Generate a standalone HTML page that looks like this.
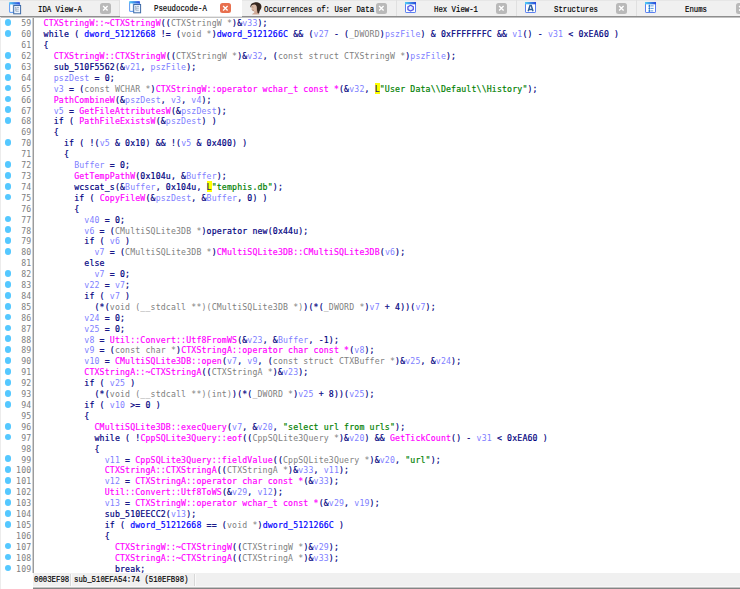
<!DOCTYPE html>
<html><head><meta charset="utf-8"><title>IDA Pseudocode-A</title>
<style>
html,body{margin:0;padding:0;background:#fff;}
#app{border-left:0;position:relative;width:740px;height:589px;overflow:hidden;background:#fff;font-family:"Liberation Sans",sans-serif;}
#tabs{position:absolute;left:0;top:0;width:740px;height:17px;background:#f0f0f0;box-sizing:border-box;border-bottom:1px solid #8e8e8e;border-top:1px solid #e6e6e6;}
.tab{position:absolute;top:-1px;height:16px;box-sizing:border-box;border-right:1px solid #e0e0e0;}
.tab.active{background:#fff;height:17px;border-right:none;border-bottom:1px solid #e8e8e8;}
.tl{position:absolute;top:4.7px;height:10px;line-height:10px;white-space:pre;color:#000;font-family:"Liberation Mono","Liberation Serif",monospace;font-size:9.5px;transform-origin:0 50%;transform:scaleX(0.772);-webkit-text-stroke:0.2px #000;}
.x{position:absolute;top:3.2px;width:10.7px;height:10.6px;border-radius:2.5px;background:#b9b9b9;}
.x.on{background:#e8704f;}
.x svg{position:absolute;left:0;top:0;}
.ic{position:absolute;top:1px;}
#code{position:absolute;left:0;top:17px;width:740px;height:556px;background:#fff;overflow:hidden;box-sizing:border-box;border-top:1px solid #c2c2c2;border-left:1px solid #ececec;}
#gutterline{position:absolute;left:31px;top:0;width:1px;height:572px;background:#9c9c9c;border-left:1px solid #d0d0d0;}
.r{position:relative;left:-1px;height:10.91px;line-height:10.91px;white-space:pre;font-family:"DejaVu Sans Mono","Liberation Mono",monospace;font-size:8.2px;letter-spacing:0.164px;color:#000080;top:0.3px;}
.dot{position:absolute;left:4.7px;top:0.9px;width:6.8px;height:6.8px;border-radius:50%;background:#55c8ff;}
.n{position:absolute;left:0;width:31.4px;text-align:right;color:#808080;}
.c{position:absolute;left:43.6px;-webkit-text-stroke:0.18px currentColor;}
.m{color:#ff00ff}.g{color:#808080;-webkit-text-stroke:0}.d{color:#0000ff}.v{color:#8080ff;-webkit-text-stroke:0}.s{color:#008000}.L{background:#ffff00;color:#202080;padding:0.9px 0 0.3px 0}
#status{position:absolute;left:33px;top:573px;width:707px;height:16px;background:linear-gradient(to bottom,#f0f0f0 0,#f0f0f0 13px,#f8f8f8 13px,#f8f8f8 14px,#c4c4c4 14px,#c4c4c4 15px);box-sizing:border-box;border-bottom:1px solid #858585;font-family:"Liberation Mono","Liberation Serif",monospace;font-size:9.5px;color:#000;white-space:pre;}
#status span{position:absolute;top:2px;height:10px;line-height:10px;transform-origin:0 50%;transform:scaleX(0.772);-webkit-text-stroke:0.2px #000;}
#status i{position:absolute;top:1px;width:1px;height:12px;background:#d8d8d8;border-right:1px solid #fafafa;}
.sb1{left:1px}.sb2{left:40.5px}

#leftedge{position:absolute;left:0;top:17px;width:1px;height:572px;background:#ececec;}
.tab.active .tl{top:4px}.tab.active .x{top:2.5px}.tab.active .ic{margin-top:-0.8px}

</style></head><body>
<div id="app">
<div id="tabs">
<svg width="0" height="0" style="position:absolute"><defs>
<linearGradient id="gt" x1="0" y1="0" x2="1" y2="0"><stop offset="0" stop-color="#4fd0f6"/><stop offset="1" stop-color="#2a45d8"/></linearGradient>
<linearGradient id="gb" x1="0" y1="0" x2="0" y2="1"><stop offset="0" stop-color="#5b8df0"/><stop offset="1" stop-color="#7aa0ee"/></linearGradient>
</defs></svg>
<div class="tab" style="left:0px;width:120px"><svg class="ic" style="left:9.0px;top:1.5px" width="13" height="13" viewBox="0 0 13 13">
<rect x="0.6" y="0.9" width="9.9" height="9.5" rx="0.8" fill="#cfe3fb" stroke="#6aa2f4" stroke-width="1.2"/>
<rect x="0.3" y="0.3" width="10.4" height="2.2" fill="url(#gt)"/>
<rect x="1.3" y="2.6" width="2.2" height="7.1" fill="#fff"/>
<rect x="4.7" y="3.5" width="6.9" height="8.3" fill="#eef5ff" stroke="#3d6aa6" stroke-width="1"/>
<path d="M6.2 5.4h1.2M6.8 5.4v3.8M6.8 7.2h3M6.8 9.2h3M8 5.4h2" stroke="#7f93ab" stroke-width="0.7" fill="none"/>
</svg><span class="tl" style="left:38.0px">IDA View-A</span><i class="x" style="left:100px"><svg width="11" height="11" viewBox="0 0 11 11"><path d="M3.1 3.1L7.6 7.6M7.6 3.1L3.1 7.6" stroke="#fff" stroke-width="1.35" fill="none"/></svg></i></div>
<div class="tab active" style="left:120px;width:122px"><svg class="ic" style="left:9.3px;top:1.5px" width="13" height="13" viewBox="0 0 13 13">
<rect x="0.6" y="0.9" width="9.9" height="9.5" rx="0.8" fill="#cfe3fb" stroke="#6aa2f4" stroke-width="1.2"/>
<rect x="0.3" y="0.3" width="10.4" height="2.2" fill="url(#gt)"/>
<rect x="1.3" y="2.6" width="2.2" height="7.1" fill="#fff"/>
<rect x="4.7" y="3.5" width="6.9" height="8.3" fill="#eef5ff" stroke="#3d6aa6" stroke-width="1"/>
<path d="M6.2 5.4h1.2M6.8 5.4v3.8M6.8 7.2h3M6.8 9.2h3M8 5.4h2" stroke="#7f93ab" stroke-width="0.7" fill="none"/>
</svg><span class="tl" style="left:34.3px">Pseudocode-A</span><i class="x on" style="left:100.2px"><svg width="11" height="11" viewBox="0 0 11 11"><path d="M3.1 3.1L7.6 7.6M7.6 3.1L3.1 7.6" stroke="#fff" stroke-width="1.35" fill="none"/></svg></i></div>
<div class="tab" style="left:242px;width:155px"><svg class="ic" style="left:7.5px;top:1.5px" width="13" height="13" viewBox="0 0 13 13">
<path d="M3.4 8L7.6 5.5L8 10.8C8.8 11.3 9.4 11.8 9.6 12.4L2 12.4C2.6 11.6 3.8 11.2 4.4 10.6Z" fill="#cfa794"/>
<path d="M0.4 5C0.2 2.5 2 0.6 4.5 0.4C6.5 0.2 8.5 0.4 10 1.5C11.6 2.8 11.8 5 11 6.8C10.4 8 9.6 8.6 9.4 10L9 11.5L7.6 11L7 8L5.5 3.5L2 3L1 5.5Z" fill="#35261f"/>
<path d="M1.4 4.5C1.6 3.2 3 2.4 4.5 2.6C6 2.8 6.8 4 6.8 5.5C6.8 7.5 6.2 9 5 9.5C3.6 9.8 2.4 9 1.9 7.6C1.5 6.6 1.3 5.5 1.4 4.5Z" fill="#dbbba8"/>
<path d="M1.6 5.2C2.2 4.8 3 4.8 3.4 5.2M1.9 7.6C2.4 8.4 3.2 8.6 4 8.2" stroke="#8a5f50" stroke-width="0.6" fill="none"/>
</svg><span class="tl" style="left:22.3px">Occurrences of: User Data</span><i class="x" style="left:134.2px"><svg width="11" height="11" viewBox="0 0 11 11"><path d="M3.1 3.1L7.6 7.6M7.6 3.1L3.1 7.6" stroke="#fff" stroke-width="1.35" fill="none"/></svg></i></div>
<div class="tab" style="left:397px;width:120px"><svg class="ic" style="left:8.0px;top:1.5px" width="12" height="12" viewBox="0 0 12 12">
<rect x="0.5" y="0.5" width="10" height="10" rx="0.6" fill="#fff" stroke="#5a7ff0" stroke-width="1"/>
<rect x="0" y="0" width="11" height="2.3" fill="url(#gt)"/>
<path d="M5.6 3.3L8.3 4.8V7.6L5.6 9L2.9 7.6V4.8Z" fill="#e4f0ff" stroke="#5353e6" stroke-width="1.3" stroke-linejoin="round"/></svg><span class="tl" style="left:37px">Hex View-1</span><i class="x" style="left:99.2px"><svg width="11" height="11" viewBox="0 0 11 11"><path d="M3.1 3.1L7.6 7.6M7.6 3.1L3.1 7.6" stroke="#fff" stroke-width="1.35" fill="none"/></svg></i></div>
<div class="tab" style="left:517px;width:120px"><svg class="ic" style="left:8.3px;top:1.5px" width="12" height="12" viewBox="0 0 12 12">
<rect x="0.5" y="0.5" width="10" height="10" rx="0.6" fill="#fff" stroke="#5a7ff0" stroke-width="1"/>
<rect x="0" y="0" width="11" height="2.3" fill="url(#gt)"/>
<path d="M3.2 9.3L5 3.4H6.2L8 9.3M4 7.4H7.2" fill="none" stroke="#2f5f9a" stroke-width="1.5"/></svg><span class="tl" style="left:36.8px">Structures</span><i class="x" style="left:99.2px"><svg width="11" height="11" viewBox="0 0 11 11"><path d="M3.1 3.1L7.6 7.6M7.6 3.1L3.1 7.6" stroke="#fff" stroke-width="1.35" fill="none"/></svg></i></div>
<div class="tab" style="left:637px;width:120px;border-right:none"><svg class="ic" style="left:8.0px;top:1.5px" width="12" height="12" viewBox="0 0 12 12">
<rect x="0.5" y="0.5" width="10" height="10" rx="0.6" fill="#fff" stroke="#5a7ff0" stroke-width="1"/>
<rect x="0" y="0" width="11" height="2.3" fill="url(#gt)"/>
<path d="M4.4 2.5V10" stroke="#4f8fe0" stroke-width="0.8"/><circle cx="4.4" cy="3.9" r="0.9" fill="#1f78d0"/><circle cx="4.4" cy="6.4" r="0.9" fill="#1f78d0"/><circle cx="4.4" cy="8.9" r="0.9" fill="#1f78d0"/><path d="M5.6 3.9H8.6M5.6 6.4H8.6M5.6 8.9H8.2" stroke="#4a90d8" stroke-width="0.9"/></svg><span class="tl" style="left:48.3px">Enums</span><i class="x" style="left:99px"><svg width="11" height="11" viewBox="0 0 11 11"><path d="M3.1 3.1L7.6 7.6M7.6 3.1L3.1 7.6" stroke="#fff" stroke-width="1.35" fill="none"/></svg></i></div>
</div>
<div id="code">
<div id="gutterline"></div>
<div class="r"><i class="dot"></i><span class="n">59</span><span class="c"><span class="m">CTXStringW::~CTXStringW</span>((<span class="g">CTXStringW *</span>)&amp;<span class="v">v33</span>);</span></div>
<div class="r"><i class="dot"></i><span class="n">60</span><span class="c">while ( <span class="d">dword_51212668</span> != (<span class="g">void *</span>)<span class="d">dword_5121266C</span> &amp;&amp; (<span class="v">v27</span> - (<span class="g">_DWORD</span>)<span class="v">pszFile</span>) &amp; 0xFFFFFFFC &amp;&amp; <span class="v">v1</span>() - <span class="v">v31</span> &lt; 0xEA60 )</span></div>
<div class="r"><span class="n">61</span><span class="c">{</span></div>
<div class="r"><i class="dot"></i><span class="n">62</span><span class="c">  <span class="m">CTXStringW::CTXStringW</span>((<span class="g">CTXStringW *</span>)&amp;<span class="v">v32</span>, (<span class="g">const struct CTXStringW *</span>)<span class="v">pszFile</span>);</span></div>
<div class="r"><i class="dot"></i><span class="n">63</span><span class="c">  sub_510F5562(&amp;<span class="v">v21</span>, <span class="v">pszFile</span>);</span></div>
<div class="r"><i class="dot"></i><span class="n">64</span><span class="c">  <span class="v">pszDest</span> = 0;</span></div>
<div class="r"><i class="dot"></i><span class="n">65</span><span class="c">  <span class="v">v3</span> = (<span class="g">const WCHAR *</span>)<span class="m">CTXStringW::operator wchar_t const *</span>(&amp;<span class="v">v32</span>, <span class="L">L</span><span class="s">"User Data\\Default\\History"</span>);</span></div>
<div class="r"><i class="dot"></i><span class="n">66</span><span class="c">  <span class="m">PathCombineW</span>(&amp;<span class="v">pszDest</span>, <span class="v">v3</span>, <span class="v">v4</span>);</span></div>
<div class="r"><i class="dot"></i><span class="n">67</span><span class="c">  <span class="v">v5</span> = <span class="m">GetFileAttributesW</span>(&amp;<span class="v">pszDest</span>);</span></div>
<div class="r"><i class="dot"></i><span class="n">68</span><span class="c">  if ( <span class="m">PathFileExistsW</span>(&amp;<span class="v">pszDest</span>) )</span></div>
<div class="r"><span class="n">69</span><span class="c">  {</span></div>
<div class="r"><i class="dot"></i><span class="n">70</span><span class="c">    if ( !(<span class="v">v5</span> &amp; 0x10) &amp;&amp; !(<span class="v">v5</span> &amp; 0x400) )</span></div>
<div class="r"><span class="n">71</span><span class="c">    {</span></div>
<div class="r"><i class="dot"></i><span class="n">72</span><span class="c">      <span class="v">Buffer</span> = 0;</span></div>
<div class="r"><i class="dot"></i><span class="n">73</span><span class="c">      <span class="m">GetTempPathW</span>(0x104u, &amp;<span class="v">Buffer</span>);</span></div>
<div class="r"><i class="dot"></i><span class="n">74</span><span class="c">      wcscat_s(&amp;<span class="v">Buffer</span>, 0x104u, <span class="L">L</span><span class="s">"temphis.db"</span>);</span></div>
<div class="r"><i class="dot"></i><span class="n">75</span><span class="c">      if ( <span class="m">CopyFileW</span>(&amp;<span class="v">pszDest</span>, &amp;<span class="v">Buffer</span>, 0) )</span></div>
<div class="r"><span class="n">76</span><span class="c">      {</span></div>
<div class="r"><i class="dot"></i><span class="n">77</span><span class="c">        <span class="v">v40</span> = 0;</span></div>
<div class="r"><i class="dot"></i><span class="n">78</span><span class="c">        <span class="v">v6</span> = (<span class="g">CMultiSQLite3DB *</span>)operator new(0x44u);</span></div>
<div class="r"><i class="dot"></i><span class="n">79</span><span class="c">        if ( <span class="v">v6</span> )</span></div>
<div class="r"><i class="dot"></i><span class="n">80</span><span class="c">          <span class="v">v7</span> = (<span class="g">CMultiSQLite3DB *</span>)<span class="m">CMultiSQLite3DB::CMultiSQLite3DB</span>(<span class="v">v6</span>);</span></div>
<div class="r"><span class="n">81</span><span class="c">        else</span></div>
<div class="r"><i class="dot"></i><span class="n">82</span><span class="c">          <span class="v">v7</span> = 0;</span></div>
<div class="r"><i class="dot"></i><span class="n">83</span><span class="c">        <span class="v">v22</span> = <span class="v">v7</span>;</span></div>
<div class="r"><i class="dot"></i><span class="n">84</span><span class="c">        if ( <span class="v">v7</span> )</span></div>
<div class="r"><i class="dot"></i><span class="n">85</span><span class="c">          (*(<span class="g">void (__stdcall **)(CMultiSQLite3DB *)</span>)(*(<span class="g">_DWORD *</span>)<span class="v">v7</span> + 4))(<span class="v">v7</span>);</span></div>
<div class="r"><i class="dot"></i><span class="n">86</span><span class="c">        <span class="v">v24</span> = 0;</span></div>
<div class="r"><i class="dot"></i><span class="n">87</span><span class="c">        <span class="v">v25</span> = 0;</span></div>
<div class="r"><i class="dot"></i><span class="n">88</span><span class="c">        <span class="v">v8</span> = <span class="m">Util::Convert::Utf8FromWS</span>(&amp;<span class="v">v23</span>, &amp;<span class="v">Buffer</span>, -1);</span></div>
<div class="r"><i class="dot"></i><span class="n">89</span><span class="c">        <span class="v">v9</span> = (<span class="g">const char *</span>)<span class="m">CTXStringA::operator char const *</span>(<span class="v">v8</span>);</span></div>
<div class="r"><i class="dot"></i><span class="n">90</span><span class="c">        <span class="v">v10</span> = <span class="m">CMultiSQLite3DB::open</span>(<span class="v">v7</span>, <span class="v">v9</span>, (<span class="g">const struct CTXBuffer *</span>)&amp;<span class="v">v25</span>, &amp;<span class="v">v24</span>);</span></div>
<div class="r"><i class="dot"></i><span class="n">91</span><span class="c">        <span class="m">CTXStringA::~CTXStringA</span>((<span class="g">CTXStringA *</span>)&amp;<span class="v">v23</span>);</span></div>
<div class="r"><i class="dot"></i><span class="n">92</span><span class="c">        if ( <span class="v">v25</span> )</span></div>
<div class="r"><i class="dot"></i><span class="n">93</span><span class="c">          (*(<span class="g">void (__stdcall **)(int)</span>)(*(<span class="g">_DWORD *</span>)<span class="v">v25</span> + 8))(<span class="v">v25</span>);</span></div>
<div class="r"><i class="dot"></i><span class="n">94</span><span class="c">        if ( <span class="v">v10</span> &gt;= 0 )</span></div>
<div class="r"><span class="n">95</span><span class="c">        {</span></div>
<div class="r"><i class="dot"></i><span class="n">96</span><span class="c">          <span class="m">CMultiSQLite3DB::execQuery</span>(<span class="v">v7</span>, &amp;<span class="v">v20</span>, <span class="s">"select url from urls"</span>);</span></div>
<div class="r"><i class="dot"></i><span class="n">97</span><span class="c">          while ( !<span class="m">CppSQLite3Query::eof</span>((<span class="g">CppSQLite3Query *</span>)&amp;<span class="v">v20</span>) &amp;&amp; <span class="m">GetTickCount</span>() - <span class="v">v31</span> &lt; 0xEA60 )</span></div>
<div class="r"><span class="n">98</span><span class="c">          {</span></div>
<div class="r"><i class="dot"></i><span class="n">99</span><span class="c">            <span class="v">v11</span> = <span class="m">CppSQLite3Query::fieldValue</span>((<span class="g">CppSQLite3Query *</span>)&amp;<span class="v">v20</span>, <span class="s">"url"</span>);</span></div>
<div class="r"><i class="dot"></i><span class="n">100</span><span class="c">            <span class="m">CTXStringA::CTXStringA</span>((<span class="g">CTXStringA *</span>)&amp;<span class="v">v33</span>, <span class="v">v11</span>);</span></div>
<div class="r"><i class="dot"></i><span class="n">101</span><span class="c">            <span class="v">v12</span> = <span class="m">CTXStringA::operator char const *</span>(&amp;<span class="v">v33</span>);</span></div>
<div class="r"><i class="dot"></i><span class="n">102</span><span class="c">            <span class="m">Util::Convert::Utf8ToWS</span>(&amp;<span class="v">v29</span>, <span class="v">v12</span>);</span></div>
<div class="r"><i class="dot"></i><span class="n">103</span><span class="c">            <span class="v">v13</span> = <span class="m">CTXStringW::operator wchar_t const *</span>(&amp;<span class="v">v29</span>, <span class="v">v19</span>);</span></div>
<div class="r"><i class="dot"></i><span class="n">104</span><span class="c">            sub_510EECC2(<span class="v">v13</span>);</span></div>
<div class="r"><i class="dot"></i><span class="n">105</span><span class="c">            if ( <span class="d">dword_51212668</span> == (<span class="g">void *</span>)<span class="d">dword_5121266C</span> )</span></div>
<div class="r"><span class="n">106</span><span class="c">            {</span></div>
<div class="r"><i class="dot"></i><span class="n">107</span><span class="c">              <span class="m">CTXStringW::~CTXStringW</span>((<span class="g">CTXStringW *</span>)&amp;<span class="v">v29</span>);</span></div>
<div class="r"><i class="dot"></i><span class="n">108</span><span class="c">              <span class="m">CTXStringA::~CTXStringA</span>((<span class="g">CTXStringA *</span>)&amp;<span class="v">v33</span>);</span></div>
<div class="r"><i class="dot"></i><span class="n">109</span><span class="c">              break;</span></div>
</div>
<div id="leftedge"></div>
<div id="status"><span class="sb1">0003EF98</span><i style="left:37px"></i><span class="sb2">sub_510EFA54:74 (510EFB98)</span><i style="left:161px"></i></div>
</div>
</body></html>
